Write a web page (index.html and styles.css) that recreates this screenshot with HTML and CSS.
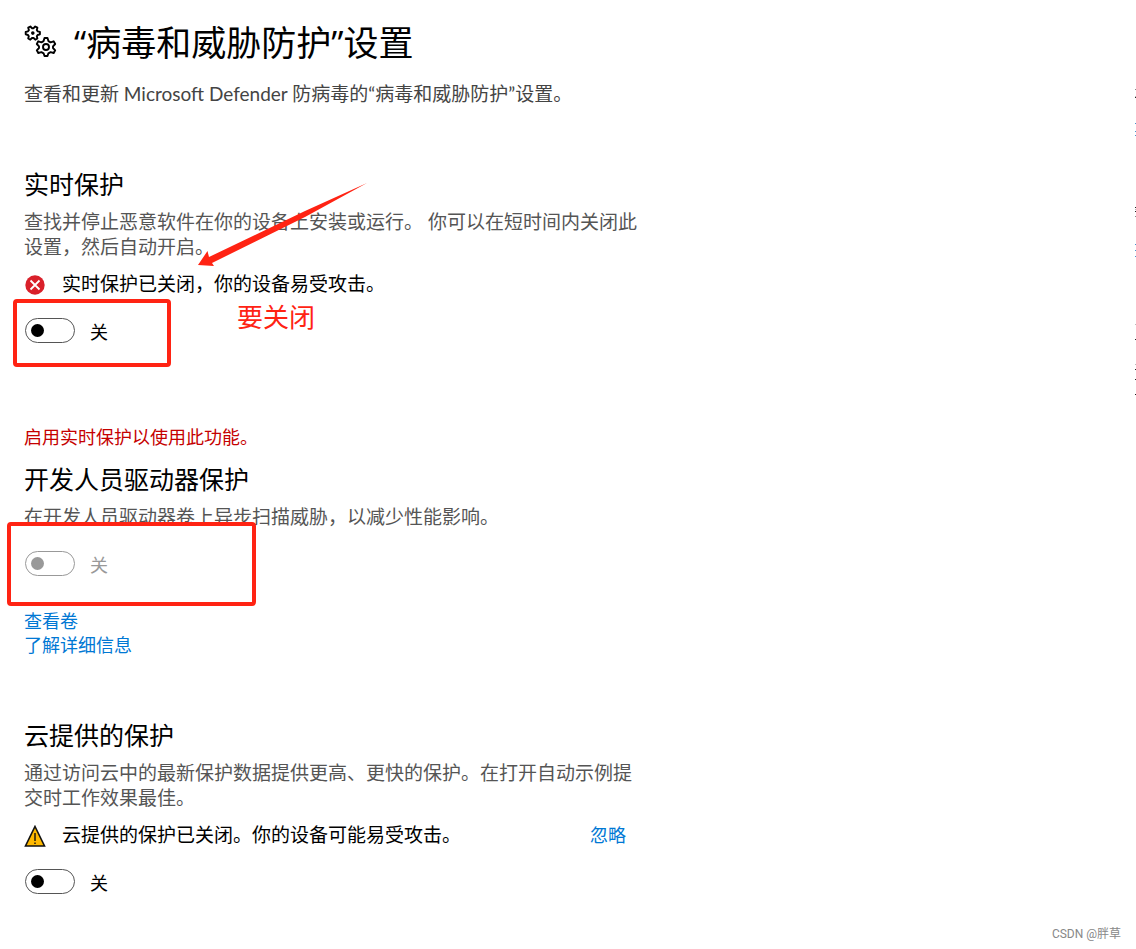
FILE: index.html
```html
<!DOCTYPE html>
<html lang="zh-CN">
<head>
	<meta charset="utf-8">
	<title>“病毒和威胁防护”设置</title>
	<link rel="stylesheet" href="styles.css">
</head>
<body>
	<main class="settings">
		<header class="page-header">
			<svg class="gears" viewBox="0 0 34 34" aria-hidden="true">
				<g fill="none" stroke="#000" stroke-width="1.9" stroke-linejoin="round">
					<path d="M7.9 4.200 L6.400 2.500 L4.200 3.700 L4.900 6.100 L4 7.300 L1.700 7.900 V10.300 L4 11 L4.800 12.300 L4.200 14.500 L6.300 15.700 L8 14 H9.600 L11.300 15.700 L13.400 14.500 L12.800 12.200 L13.600 11 L15.900 10.300 V7.900 L13.600 7.300 L12.800 6 L13.400 3.700 L11.200 2.500 L9.600 4.200 Z"/>
					<path d="M20.500 14 H23.500 L24.400 17.100 L26.600 18.300 L29.600 17.300 L31.200 20 L29 22.400 V24 L31.200 26.300 L29.700 29 L26.600 28.100 L24.400 29.300 L23.500 32 H20.500 L19.600 29.300 L17.400 28.100 L14.300 29 L12.800 26.300 L15 24 V22.400 L12.800 20 L14.300 17.300 L17.400 18.300 L19.600 17.100 Z"/>
					<circle cx="22" cy="23" r="3"/>
				</g>
				<circle cx="8.800" cy="9.100" r="1.800"/>
			</svg>
			<h1>“病毒和威胁防护”设置</h1>
		</header>
		<p class="intro">查看和更新 Microsoft Defender 防病毒的“病毒和威胁防护”设置。</p>

		<section class="setting">
			<h2>实时保护</h2>
			<p class="desc">查找并停止恶意软件在你的设备上安装或运行。 你可以在短时间内关闭此设置，然后自动开启。</p>
			<div class="status">
				<svg class="status-icon" viewBox="0 0 22 22" aria-hidden="true">
					<circle cx="11" cy="11" r="9.7" fill="#d9202a"/>
					<path d="M6.5 6.5 L15.5 15.5 M15.5 6.5 L6.5 15.5" stroke="#fff" stroke-width="1.8"/>
				</svg>
				<span>实时保护已关闭，你的设备易受攻击。</span>
			</div>
			<div class="toggle">
				<input type="checkbox" role="switch" id="realtime">
				<label for="realtime">关</label>
				<div class="mark mark-realtime"></div>
			</div>
			<svg class="arrow" viewBox="0 0 172 86" aria-hidden="true">
				<path d="M1 82 L10.500 68 L12 74 L108 28 L170 0 L108 34 L15 80 L17 83 Z" fill="#ff2313"/>
			</svg>
			<span class="remark">要关闭</span>
		</section>

		<section class="setting has-note">
			<p class="note">启用实时保护以使用此功能。</p>
			<h2>开发人员驱动器保护</h2>
			<p class="desc">在开发人员驱动器卷上异步扫描威胁，以减少性能影响。</p>
			<div class="toggle">
				<input type="checkbox" role="switch" id="devdrive" disabled>
				<label for="devdrive">关</label>
				<div class="mark mark-devdrive"></div>
			</div>
			<div class="links">
				<a href="#">查看卷</a>
				<a href="#">了解详细信息</a>
			</div>
		</section>

		<section class="setting">
			<h2>云提供的保护</h2>
			<p class="desc">通过访问云中的最新保护数据提供更高、更快的保护。在打开自动示例提交时工作效果最佳。</p>
			<div class="status">
				<svg class="status-icon" viewBox="0 0 22 22" aria-hidden="true">
					<path d="M11 1.500 L20.500 21 H1.500 Z" fill="#ffb900" stroke="#111" stroke-width="1.600"/>
					<path d="M11 8 V16 M11 17.500 V19" stroke="#111" stroke-width="1.400"/>
				</svg>
				<span>云提供的保护已关闭。你的设备可能易受攻击。</span>
				<a class="dismiss" href="#">忽略</a>
			</div>
			<div class="toggle">
				<input type="checkbox" role="switch" id="cloud">
				<label for="cloud">关</label>
			</div>
		</section>
	</main>

	<!-- sliver of the help column at the window edge -->
	<svg class="edge" viewBox="0 0 1 320" shape-rendering="crispEdges" aria-hidden="true">
		<path d="M0 9h1v1H0z M0 136h1v1H0z" fill="#888"/>
		<path d="M0 16h1v1H0z M0 129h1v1H0z M0 244h1v1H0z M0 284h1v1H0z" fill="#bbb"/>
		<path d="M0 17h1v1H0z M0 127h1v1H0z M0 131h1v1H0z M0 259h1v1H0z M0 289h1v1H0z M0 299h1v1H0z M0 314h1v1H0z" fill="#222"/>
		<path d="M0 43h1v1H0z M0 51h1v1H0z M0 55h1v1H0z M0 164h1v1H0z M0 170h1v1H0z M0 176h1v1H0z" fill="#4a94cf"/>
	</svg>
	<span class="watermark">CSDN @胖草</span>
</body>
</html>
```
FILE: styles.css
```css
body {
	margin: 0;
	background: #fff;
	color: #000;
	font-family: "Open Sans", "Noto Sans CJK SC", sans-serif;
	font-size: 19px;
	line-height: 25px;
}

h1, h2, p {
	margin: 0;
	font-weight: 400;
}

a {
	color: #0078d4;
	font-size: 18px;
	text-decoration: none;
}

.settings {
	max-width: 616px;
	padding: 18px 24px;
}

.page-header {
	display: flex;
	gap: 16px;
	height: 52px;
}

.gears {
	width: 34px;
	height: 34px;
	margin-top: 6px;
}

h1 {
	font-size: 35px;
	line-height: 50px;
}

.intro {
	margin-top: 11px;
	color: #444;
	font-family: Lato, "Noto Sans CJK SC", sans-serif;
}

.setting {
	position: relative;
	margin-top: 60px;
}

.has-note {
	margin-top: 82px;
}

.note {
	margin-bottom: 11px;
	color: #c50000;
	font-size: 18px;
}

h2 {
	font-size: 25px;
	line-height: 36px;
}

.desc {
	margin-top: 8px;
	color: #555;
}

.status {
	display: flex;
	align-items: center;
	gap: 16px;
	margin-top: 12px;
}

.status-icon {
	width: 22px;
	height: 22px;
}

.dismiss {
	margin-left: auto;
	margin-right: 14px;
}

.toggle {
	position: relative;
	display: flex;
	align-items: center;
	gap: 15px;
	height: 25px;
	margin-top: 21px;
	font-size: 18px;
}

.toggle input {
	appearance: none;
	display: flex;
	align-items: center;
	box-sizing: border-box;
	width: 50px;
	height: 25px;
	margin: 0 0 0 1px;
	padding-left: 5px;
	border: 1px solid #555;
	border-radius: 13px;
}

.toggle input::before {
	content: "";
	width: 13px;
	height: 13px;
	border-radius: 50%;
	background: #000;
}

.toggle label {
	padding-top: 3px;
}

.toggle input:disabled {
	border-color: #999;
}

.toggle input:disabled::before {
	background: #999;
}

.toggle input:disabled + label {
	color: #999;
}

.links {
	display: flex;
	flex-direction: column;
	align-items: flex-start;
	margin-top: 33px;
	line-height: 24px;
}

/* red annotations */
.mark {
	position: absolute;
	box-sizing: border-box;
	border: 4px solid #ff2313;
	border-radius: 4px;
}

.mark-realtime {
	left: -11px;
	top: -19px;
	width: 158px;
	height: 68px;
}

.mark-devdrive {
	left: -17px;
	top: -29px;
	width: 249px;
	height: 84px;
}

.arrow {
	position: absolute;
	left: 173px;
	top: 17px;
	width: 172px;
	height: 86px;
}

.remark {
	position: absolute;
	left: 213px;
	top: 133px;
	color: #ff2313;
	font-size: 26px;
	line-height: 36px;
}

.edge {
	position: absolute;
	top: 80px;
	right: 0;
	width: 1px;
	height: 320px;
}

.watermark {
	position: absolute;
	top: 924px;
	right: 15px;
	color: #888;
	font-family: Roboto, "Noto Sans CJK SC", sans-serif;
	font-size: 12px;
	line-height: 20px;
}
```
